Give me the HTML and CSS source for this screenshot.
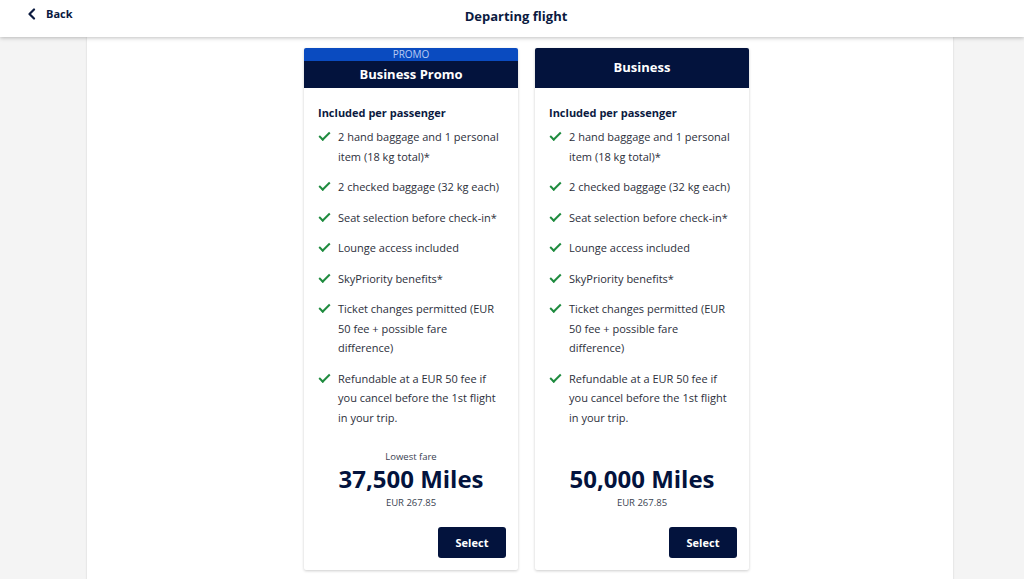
FILE: index.html
```html
<!DOCTYPE html>
<html lang="en">
<head>
    <meta charset="UTF-8">
    <meta name="viewport" content="width=device-width, initial-scale=1.0">
    <title>Departing flight</title>
    <link rel="stylesheet" href="styles.css">
</head>
<body>
    <header class="topbar">
        <a class="back" href="#">
            <svg width="10" height="12" viewBox="0 0 10 12"><path d="M7 1.5 L2.5 6 L7 10.5" fill="none" stroke="#0b1a3f" stroke-width="2.2" stroke-linecap="round" stroke-linejoin="round"/></svg>
            Back
        </a>
        <h1>Departing flight</h1>
    </header>

    <main class="page">
        <div class="fares">
            <div class="card">
                <div class="promo">PROMO</div>
                <div class="card-title short">Business Promo</div>
                <div class="card-body">
                    <h2>Included per passenger</h2>
                    <ul class="perks">
                        <li>2 hand baggage and 1 personal item (18 kg total)*</li>
                        <li>2 checked baggage (32 kg each)</li>
                        <li>Seat selection before check-in*</li>
                        <li>Lounge access included</li>
                        <li>SkyPriority benefits*</li>
                        <li>Ticket changes permitted (EUR 50 fee + possible fare difference)</li>
                        <li>Refundable at a EUR 50 fee if you cancel before the 1st flight in your trip.</li>
                    </ul>
                    <div class="price">
                        <div class="note">Lowest fare</div>
                        <div class="miles">37,500 Miles</div>
                        <div class="note">EUR 267.85</div>
                    </div>
                    <div class="actions"><button>Select</button></div>
                </div>
            </div>

            <div class="card">
                <div class="card-title">Business</div>
                <div class="card-body">
                    <h2>Included per passenger</h2>
                    <ul class="perks">
                        <li>2 hand baggage and 1 personal item (18 kg total)*</li>
                        <li>2 checked baggage (32 kg each)</li>
                        <li>Seat selection before check-in*</li>
                        <li>Lounge access included</li>
                        <li>SkyPriority benefits*</li>
                        <li>Ticket changes permitted (EUR 50 fee + possible fare difference)</li>
                        <li>Refundable at a EUR 50 fee if you cancel before the 1st flight in your trip.</li>
                    </ul>
                    <div class="price">
                        <div class="note">&nbsp;</div>
                        <div class="miles">50,000 Miles</div>
                        <div class="note">EUR 267.85</div>
                    </div>
                    <div class="actions"><button>Select</button></div>
                </div>
            </div>
        </div>
    </main>
</body>
</html>
```

FILE: styles.css
```css
html, body {
    height: 100%;
    overflow: hidden;
}
body {
    font-family: 'Open Sans', sans-serif;
    background-color: #f4f4f4;
    margin: 0;
    color: #2c2f3b;
}
.topbar {
    position: relative;
    z-index: 2;
    height: 37px;
    background: #fff;
    box-shadow: 0 1px 4px rgba(0, 0, 0, 0.25);
    display: flex;
    justify-content: center;
}
.back {
    position: absolute;
    left: 27px;
    top: 6px;
    display: flex;
    align-items: center;
    gap: 9px;
    color: #0b1a3f;
    font-weight: bold;
    font-size: 11px;
    text-decoration: none;
}
.topbar h1 {
    margin: 6px 0 0 8px;
    font-size: 13px;
    line-height: 20px;
    color: #0b1a3f;
    font-weight: bold;
}
.page {
    width: 866px;
    margin-left: calc(50% - 425px);
    min-height: 100%;
    background: #fff;
    box-shadow: 0 0 2px rgba(0, 0, 0, 0.15);
    padding-top: 11px;
    box-sizing: border-box;
}
.fares {
    display: flex;
    justify-content: center;
    gap: 17px;
    padding-left: 13px;
}
.card {
    width: 214px;
    background: #fff;
    box-shadow: 0 1px 3px rgba(0, 0, 0, 0.2);
    border-radius: 2px;
    overflow: hidden;
}
.promo {
    height: 13px;
    background: #0a4bc0;
    color: #b9cbf3;
    font-size: 10px;
    line-height: 13px;
    text-align: center;
}
.card-title {
    height: 40px;
    padding-bottom: 2px;
    box-sizing: border-box;
    background: #03133d;
    color: #fff;
    font-weight: bold;
    font-size: 13px;
    display: flex;
    align-items: center;
    justify-content: center;
}
.card-title.short {
    height: 27px;
}
.card-body {
    padding: 16px 17px 12px 14px;
}
.card-body h2 {
    margin: 0 0 5px;
    font-size: 11px;
    color: #0b1a3f;
    font-weight: bold;
    line-height: 18px;
}
.perks {
    list-style: none;
    margin: 0;
    padding: 0;
}
.perks li {
    position: relative;
    padding-left: 20px;
    font-size: 11px;
    line-height: 19.5px;
    margin-bottom: 11px;
}
.perks li::before {
    content: '';
    position: absolute;
    left: 1px;
    top: 5px;
    width: 9px;
    height: 4px;
    border-left: 2px solid #1f8b3f;
    border-bottom: 2px solid #1f8b3f;
    transform: rotate(-45deg);
}
.price {
    text-align: center;
    margin: 22px -3px 0 0;
    color: #03133d;
}
.note {
    font-size: 9.5px;
    line-height: 15px;
    color: #3a3f52;
}
.miles {
    font-size: 24px;
    font-weight: bold;
    line-height: 29px;
    margin-bottom: 2px;
}
.actions {
    display: flex;
    justify-content: flex-end;
    margin: 17px -5px 0 0;
}
.actions button {
    width: 68px;
    height: 31px;
    background: #03133d;
    color: #fff;
    border: none;
    border-radius: 3px;
    font-family: inherit;
    font-weight: bold;
    font-size: 11px;
    cursor: pointer;
}
```
